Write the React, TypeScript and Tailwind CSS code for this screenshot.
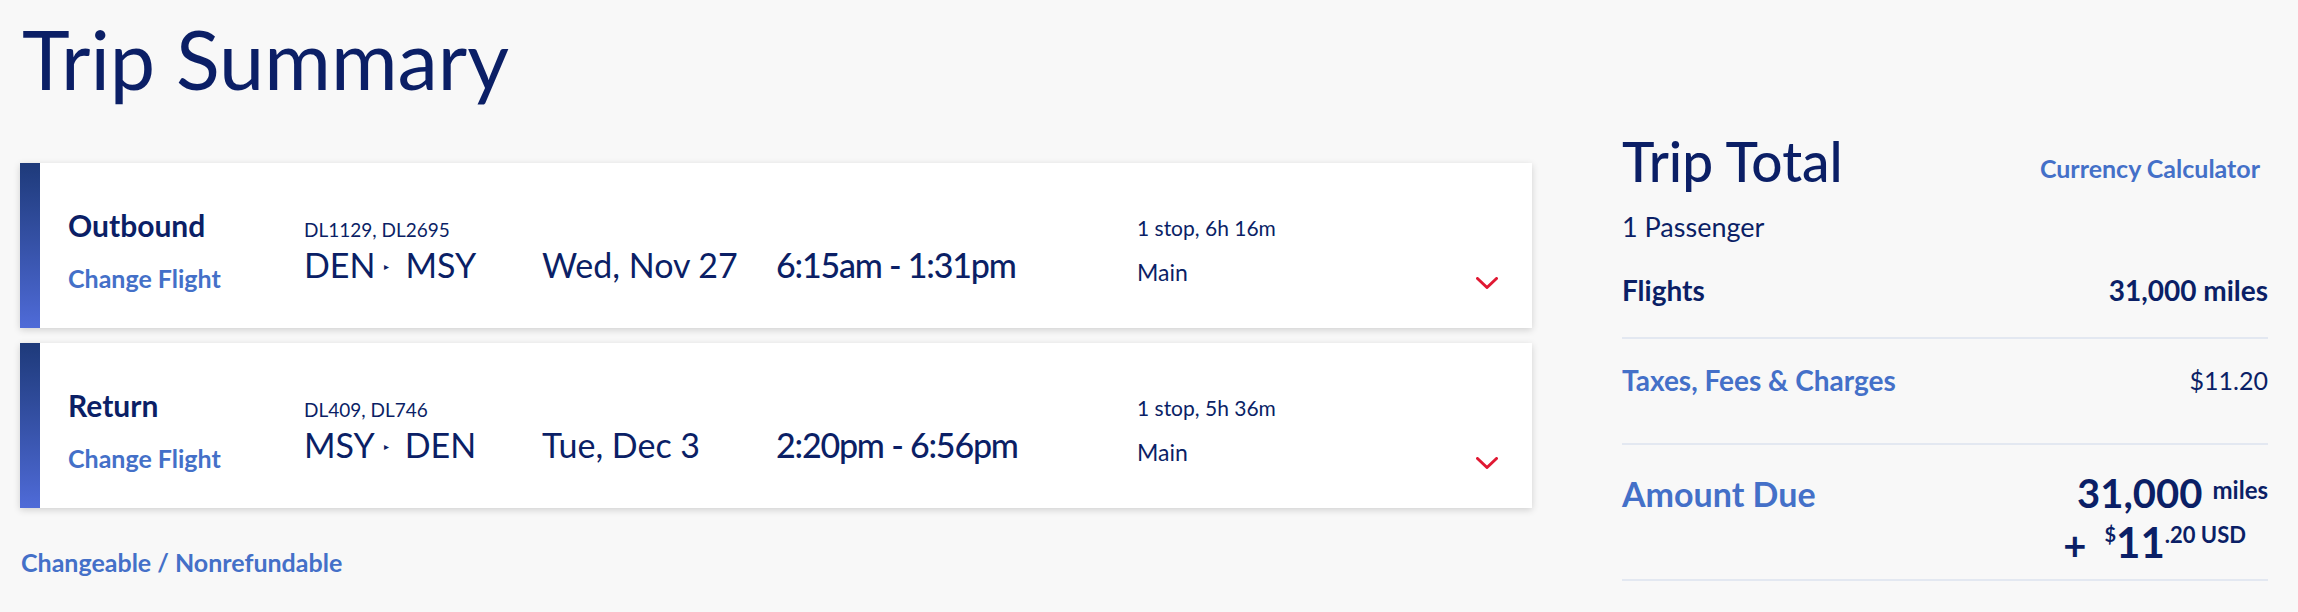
import React from 'react';

const NAVY = 'text-[#0b1f66]';
const LINK = 'text-[#4470c8]';

interface Leg {
  label: string;
  flights: string;
  from: string;
  to: string;
  date: string;
  time: string;
  stops: string;
  cabin: string;
}

const LEGS: Leg[] = [
  {
    label: 'Outbound',
    flights: 'DL1129, DL2695',
    from: 'DEN',
    to: 'MSY',
    date: 'Wed, Nov 27',
    time: '6:15am - 1:31pm',
    stops: '1 stop, 6h 16m',
    cabin: 'Main',
  },
  {
    label: 'Return',
    flights: 'DL409, DL746',
    from: 'MSY',
    to: 'DEN',
    date: 'Tue, Dec 3',
    time: '2:20pm - 6:56pm',
    stops: '1 stop, 5h 36m',
    cabin: 'Main',
  },
];

function Chevron() {
  return (
    <svg width="22" height="12" viewBox="0 0 22 12" fill="none" className="mt-[114px]">
      <path d="M1.5 1.5 L11 10.5 L20.5 1.5" stroke="#e01933" strokeWidth="3" strokeLinecap="round" strokeLinejoin="round" />
    </svg>
  );
}

function LegCard({ leg }: { leg: Leg }) {
  return (
    <div className="flex h-[165px] w-[1512px] bg-white shadow-[0_2px_7px_rgba(0,0,0,0.16)]">
      {/* Accent bar */}
      <div className="w-[20px] shrink-0 bg-gradient-to-b from-[#1e3a7a] to-[#4f6bd8]" />

      <div className="flex flex-1 pl-[28px]">
        {/* Label + change link */}
        <div className="w-[236px] shrink-0 flex flex-col items-start">
          <span className={`mt-[47px] text-[30px] leading-[30px] font-bold ${NAVY}`}>{leg.label}</span>
          <a className={`mt-[26px] text-[25px] leading-[25px] font-bold ${LINK}`}>Change Flight</a>
        </div>

        {/* Flight numbers + route */}
        <div className="w-[238px] shrink-0 flex flex-col">
          <span className={`mt-[57px] text-[19px] leading-[19px] ${NAVY}`}>{leg.flights}</span>
          <span className={`mt-[9px] text-[34px] leading-[34px] flex items-center ${NAVY}`}>
            {leg.from}
            <span className="ml-[9px] mr-[16px] text-[10px] leading-[10px] pt-[2px]">▸</span>
            {leg.to}
          </span>
        </div>

        {/* Date */}
        <div className="w-[234px] shrink-0">
          <div className={`mt-[85px] text-[34px] leading-[34px] ${NAVY}`}>{leg.date}</div>
        </div>

        {/* Times */}
        <div className="w-[361px] shrink-0">
          <div className={`mt-[85px] text-[34px] leading-[34px] font-medium tracking-[-1.2px] ${NAVY}`}>{leg.time}</div>
        </div>

        {/* Stops + cabin */}
        <div className="flex-1 flex flex-col">
          <span className={`mt-[54px] text-[21px] leading-[21px] ${NAVY}`}>{leg.stops}</span>
          <span className={`mt-[23px] text-[23px] leading-[23px] ${NAVY}`}>{leg.cabin}</span>
        </div>

        <div className="pr-[34px]">
          <Chevron />
        </div>
      </div>
    </div>
  );
}

function SummaryRow({ children, className = '' }: { children: React.ReactNode; className?: string }) {
  return <div className={`flex justify-between items-start border-b-2 border-[#e3e8f1] ${className}`}>{children}</div>;
}

export default function App() {
  return (
    <div className="w-[2298px] h-[612px] overflow-hidden bg-[#f8f8f8] font-['Lato',sans-serif] flex">
      {/* Left column */}
      <div className="pl-[20px] w-[1532px] shrink-0 flex flex-col">
        <h1 className={`mt-[18px] pl-[2px] text-[81px] leading-[81px] font-normal ${NAVY}`}>Trip Summary</h1>

        <div className="mt-[64px] flex flex-col gap-[15px]">
          {LEGS.map((leg) => (
            <LegCard key={leg.label} leg={leg} />
          ))}
        </div>

        <a className={`mt-[42px] pl-[1px] text-[25px] leading-[25px] font-bold ${LINK}`}>Changeable / Nonrefundable</a>
      </div>

      {/* Right column: trip total */}
      <div className="ml-[90px] w-[646px] shrink-0 flex flex-col">
        <div className="mt-[134px] flex justify-between items-start">
          <h2 className={`text-[55px] leading-[55px] font-medium ${NAVY}`}>Trip Total</h2>
          <a className={`mt-[22px] mr-[8px] text-[25px] leading-[25px] font-bold ${LINK}`}>Currency Calculator</a>
        </div>

        <div className={`mt-[24px] text-[27px] leading-[27px] ${NAVY}`}>1 Passenger</div>

        <SummaryRow className="pt-[36px] pb-[33px]">
          <span className={`text-[28px] leading-[28px] font-bold ${NAVY}`}>Flights</span>
          <span className={`text-[28px] leading-[28px] font-bold ${NAVY}`}>31,000 miles</span>
        </SummaryRow>

        <SummaryRow className="pt-[27px] pb-[49px]">
          <a className={`text-[28px] leading-[28px] font-bold ${LINK}`}>Taxes, Fees &amp; Charges</a>
          <span className={`text-[25px] leading-[25px] mt-[2px] ${NAVY}`}>$11.20</span>
        </SummaryRow>

        <SummaryRow className="pt-[32px] pb-[14px]">
          <a className={`text-[34px] leading-[34px] font-bold ${LINK}`}>Amount Due</a>
          <div className={`-mt-[4px] flex flex-col items-end ${NAVY}`}>
            <div className="flex items-start">
              <span className="text-[40px] leading-[40px] font-bold">31,000</span>
              <span className="ml-[10px] mt-[5px] text-[24px] leading-[24px] font-bold">miles</span>
            </div>
            <div className="flex items-start mr-[22px] mt-[8px]">
              <span className="text-[40px] leading-[40px] font-bold mr-[18px] mt-[4px]">+</span>
              <span className="mt-[3px] text-[20px] leading-[20px] font-bold">$</span>
              <span className="text-[42px] leading-[42px] font-bold">11</span>
              <span className="mt-[3px] text-[22px] leading-[22px] font-bold">.20 USD</span>
            </div>
          </div>
        </SummaryRow>
      </div>
    </div>
  );
}
